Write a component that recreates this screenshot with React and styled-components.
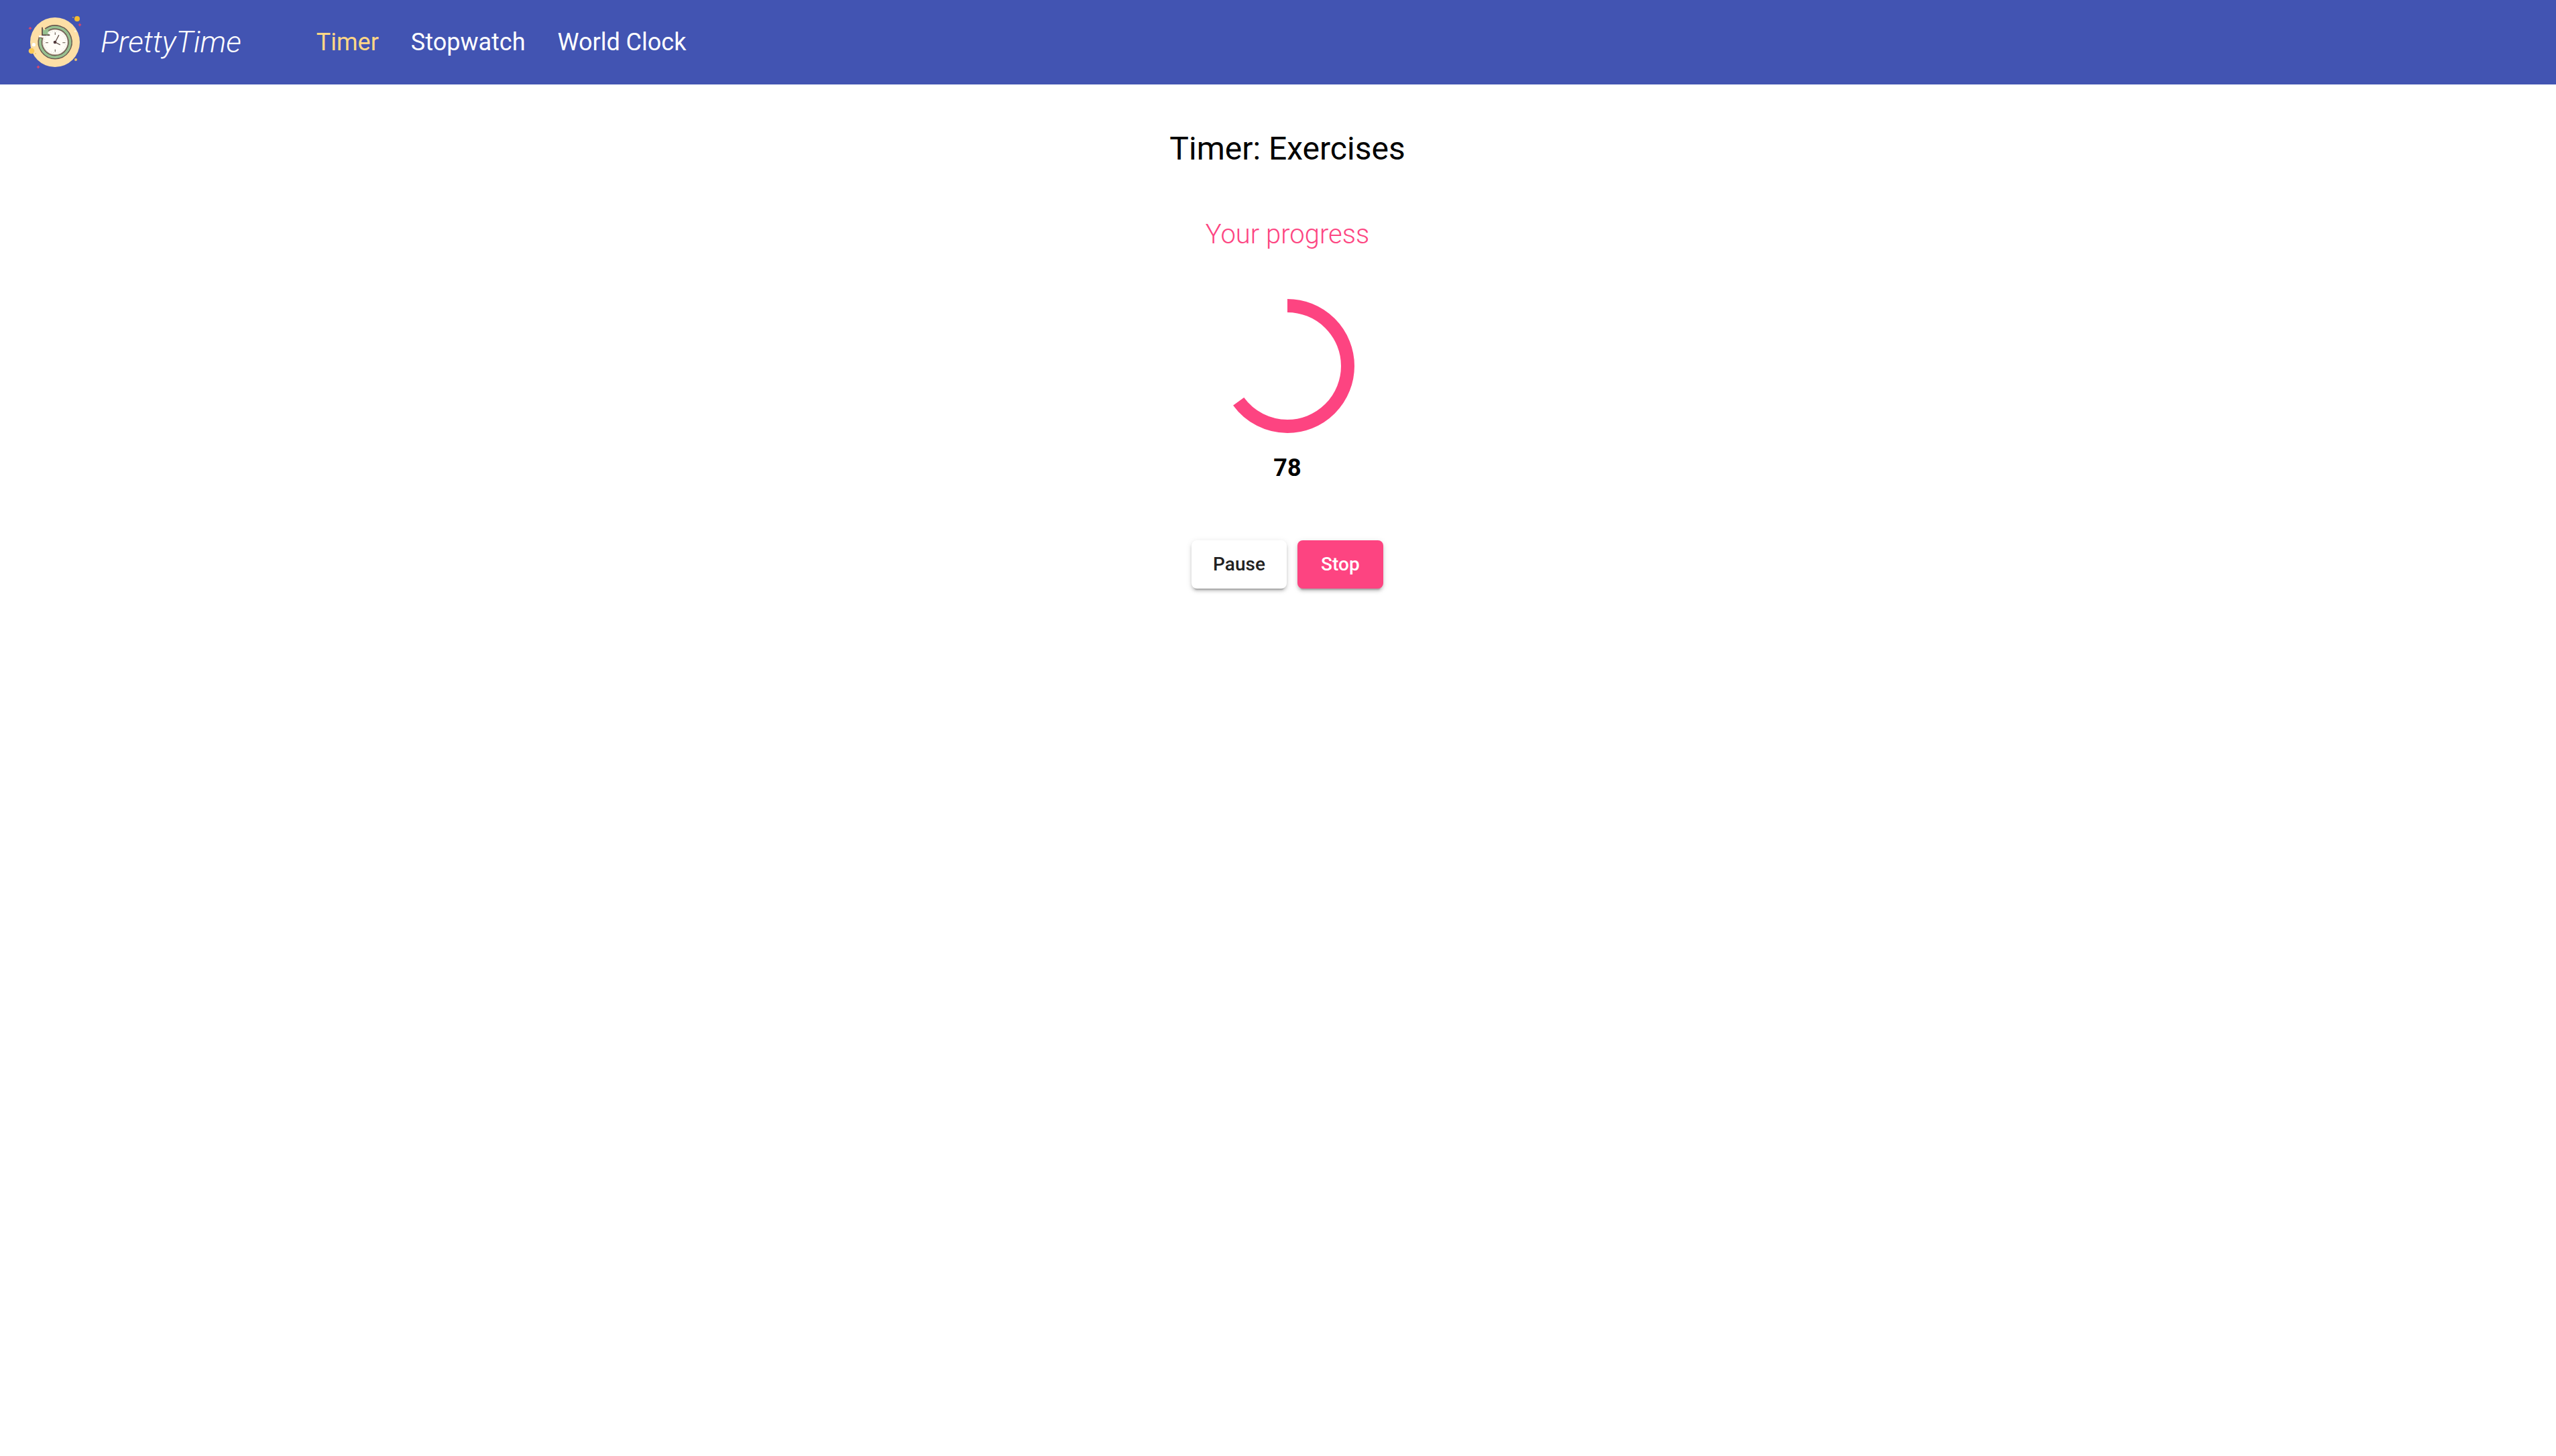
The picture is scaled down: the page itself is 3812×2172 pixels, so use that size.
import React from 'react';
import styled, { createGlobalStyle } from 'styled-components';

const GlobalStyle = createGlobalStyle`
  body {
    margin: 0;
    background: #fff;
    color: #000;
    font-family: Roboto, 'Liberation Sans', sans-serif;
  }
`;

const Toolbar = styled.header`
  display: flex;
  align-items: center;
  height: 126px;
  padding: 0 40px;
  background: #4254b2;
`;

const Brand = styled.a`
  display: flex;
  align-items: center;
  gap: 26px;
  margin-right: 112px;
  color: #fff;
  font-size: 45px;
  font-style: italic;
  font-weight: 300;
  line-height: 56px;
  text-decoration: none;
`;

const Logo = styled.svg`
  display: block;
  width: 84px;
  height: 84px;
`;

const Nav = styled.nav`
  display: flex;
  gap: 48px;
`;

const NavLink = styled.a`
  color: ${({ $active }) => ($active ? '#ffd786' : '#fff')};
  font-size: 36px;
  font-weight: 400;
  line-height: 48px;
  text-decoration: none;
`;

const Main = styled.main`
  display: flex;
  flex-direction: column;
  align-items: center;
  padding: 68px 0 68px 28px;
`;

const Title = styled.h1`
  margin: 0 0 76px;
  font-size: 48px;
  font-weight: 400;
  line-height: 56px;
`;

const Subtitle = styled.h2`
  margin: 0 0 72px;
  color: #fd4481;
  font-size: 40px;
  font-weight: 300;
  line-height: 48px;
`;

const Ring = styled.svg`
  display: block;
  width: 200px;
  height: 200px;
`;

const Count = styled.p`
  margin: 28px 0 84px;
  font-size: 36px;
  font-weight: 700;
  line-height: 48px;
`;

const Actions = styled.div`
  display: flex;
  gap: 16px;
`;

const Button = styled.button`
  height: 72px;
  min-width: 128px;
  padding: 0 32px;
  border: 0;
  border-radius: 8px;
  background: ${({ $accent }) => ($accent ? '#fd4481' : '#fff')};
  color: ${({ $accent }) => ($accent ? '#fff' : '#212121')};
  box-shadow:
    0 6px 2px -4px rgba(0, 0, 0, 0.2),
    0 4px 4px rgba(0, 0, 0, 0.14),
    0 2px 10px rgba(0, 0, 0, 0.12);
  font-family: inherit;
  font-size: 28px;
  font-weight: 500;
  line-height: 36px;
  cursor: pointer;
`;

const links = ['Timer', 'Stopwatch', 'World Clock'];

function ClockLogo() {
  return (
    <Logo viewBox="30 30 252 252" aria-hidden="true">
      <circle cx="156" cy="156" r="111" fill="#fddfa6" />
      <circle cx="255" cy="51" r="12" fill="#f5bc2f" />
      <circle cx="237" cy="45" r="3" fill="#c9a04f" />
      <circle cx="249" cy="234" r="6" fill="#efc168" />
      <circle cx="51" cy="195" r="13" fill="#fbc958" />
      <circle cx="69" cy="207" r="3" fill="#fbc958" />
      <circle cx="61" cy="167" r="8" fill="#fff" />
      <circle cx="247" cy="107" r="5" fill="#fff0d2" />
      <g fill="#d8466d">
        <path d="M45 86l3 4 5 4-5 3-3 4-3-4-5-3 5-4z" />
        <path d="M267 70l3 5 5 3-5 3-3 5-3-5-5-3 5-3z" />
        <path d="M81 259l3 5 5 3-5 3-3 5-3-5-5-3 5-3z" />
      </g>
      <circle cx="157" cy="155" r="56" fill="#fffdf7" stroke="#d5cdc2" strokeWidth="4" />
      <path
        d="M93 134A67 67 0 1 0 116 102"
        fill="none"
        stroke="#6b5a50"
        strokeWidth="20"
      />
      <path
        d="M92 138A67 67 0 1 0 114 104"
        fill="none"
        stroke="#98c191"
        strokeWidth="11"
      />
      <path d="M84 130h51" stroke="#fff" strokeWidth="8" />
      <path d="M99 91v32h34l-11-9 8-7-12-12-10 8z" fill="#98c191" />
      <path d="M99 89v35h34" fill="none" stroke="#594642" strokeWidth="5" />
      <circle cx="157" cy="155" r="48" fill="none" stroke="#ded8ce" strokeWidth="3" strokeDasharray="4 6" />
      <path
        d="M157 112v11M157 188v11M114 158h12M190 158h12"
        stroke="#81756b"
        strokeWidth="4"
      />
      <path d="M157 156l16-31M157 156l21 11" stroke="#65544d" strokeWidth="4" strokeLinecap="round" />
      <circle cx="156" cy="156" r="7" fill="#513a3b" />
    </Logo>
  );
}

function ProgressRing({ value }) {
  return (
    <Ring
      viewBox="0 0 200 200"
      role="progressbar"
      aria-label="Your progress"
      aria-valuenow={value}
      aria-valuemin={0}
      aria-valuemax={100}
    >
      <circle
        cx="100"
        cy="100"
        r="90"
        fill="none"
        stroke="#fd4481"
        strokeWidth="20"
        pathLength="100"
        strokeDasharray={`${value} 100`}
        transform="rotate(-90 100 100)"
      />
    </Ring>
  );
}

export default function App() {
  return (
    <>
      <GlobalStyle />
      <Toolbar>
        <Brand href="#">
          <ClockLogo />
          PrettyTime
        </Brand>
        <Nav>
          {links.map((label, i) => (
            <NavLink key={label} href="#" $active={i === 0}>
              {label}
            </NavLink>
          ))}
        </Nav>
      </Toolbar>
      <Main>
        <Title>Timer: Exercises</Title>
        <Subtitle>Your progress</Subtitle>
        <ProgressRing value={65} />
        <Count>78</Count>
        <Actions>
          <Button type="button">Pause</Button>
          <Button type="button" $accent>Stop</Button>
        </Actions>
      </Main>
    </>
  );
}
